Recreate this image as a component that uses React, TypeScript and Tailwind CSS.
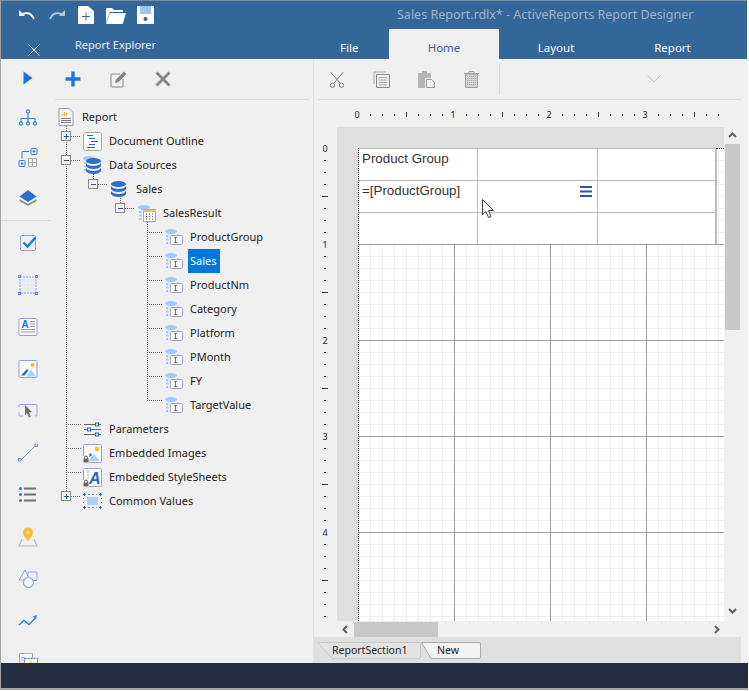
import type { ReactNode } from 'react';

const BLUE = '#2f7ad6';
const EDGE = '#8fa5d8';
const PALE = '#9fcbfa';
const GRAY = '#858585';

function Ico({ w, h, children }: { w: number; h: number; children: ReactNode }) {
  return (
    <svg width={w} height={h} viewBox={`0 0 ${w} ${h}`} fill="none" className="block shrink-0">
      {children}
    </svg>
  );
}

// rail icons
const railIcons: { id: string; icon: ReactNode }[] = [
  { id: 'play', icon: <Ico w={20} h={20}><path d="M5.500 3.500l9 6.500-9 6.500z" fill="#1a74d2" /></Ico> },
  {
    id: 'tree',
    icon: (
      <Ico w={20} h={20}>
        <g stroke="#3b84d6" strokeWidth="1.1" fill="#f0f0f0">
          <path d="M10 5v5M3 14v-3.500h14V14M10 10v4" />
          <circle cx="10" cy="3.500" r="1.600" />
          <circle cx="3" cy="15.500" r="1.600" />
          <circle cx="10" cy="15.500" r="1.600" />
          <circle cx="17" cy="15.500" r="1.600" />
        </g>
      </Ico>
    ),
  },
  {
    id: 'matrix',
    icon: (
      <Ico w={20} h={20}>
        <rect x="13" y="0.500" width="6" height="6" rx="1" stroke={BLUE} />
        <path d="M14.500 3.500h3M16 2v3" stroke={BLUE} />
        <rect x="1" y="12.500" width="6" height="6" rx="1" stroke={BLUE} />
        <path d="M2.500 15.500h3M4 14v3" stroke={BLUE} />
        <path d="M4 10.500V3.500h7" stroke={BLUE} />
        <path d="M10.500 10.500h8v8h-8zM14.500 10.500v8M10.500 14.500h8" stroke="#a8a8a8" />
      </Ico>
    ),
  },
  {
    id: 'layers',
    icon: (
      <Ico w={20} h={20}>
        <path d="M1.500 12l8.500 5 8.500-5" stroke="#8a8a8a" strokeWidth="1.600" />
        <path d="M10 2l8.500 6.500L10 14 1.500 8.500z" fill="#2a6fd0" />
      </Ico>
    ),
  },
];

const railIcons2: { id: string; icon: ReactNode }[] = [
  {
    id: 'check',
    icon: (
      <Ico w={20} h={20}>
        <rect x="2.500" y="2.500" width="15" height="15" rx="1.500" stroke={EDGE} />
        <path d="M5.500 9.500l4 4 8-9" stroke="#1f78d8" strokeWidth="2.400" />
      </Ico>
    ),
  },
  {
    id: 'container',
    icon: (
      <Ico w={20} h={20}>
        <path d="M2 2h16v16H2zM6 2v16M10 2v16M14 2v16M2 6h16M2 10h16M2 14h16" stroke="#dde3f0" strokeWidth="0.800" />
        <path d="M2 2h16v16H2z" stroke={EDGE} strokeDasharray="2 1" />
        <g fill="#f0f0f0" stroke="#4f86d8">
          <rect x="0.500" y="0.500" width="2" height="2" />
          <rect x="17.500" y="0.500" width="2" height="2" />
          <rect x="0.500" y="17.500" width="2" height="2" />
          <rect x="17.500" y="17.500" width="2" height="2" />
        </g>
      </Ico>
    ),
  },
  {
    id: 'textbox',
    icon: (
      <Ico w={20} h={20}>
        <rect x="1" y="1.500" width="18" height="17" rx="1" fill="#fafafa" stroke={EDGE} />
        <text x="3.500" y="10.500" fontSize="10" fontWeight="700" fill="#1f72d0" fontFamily="Liberation Sans, sans-serif">A</text>
        <path d="M12 4.500h5M12 7h5M12 9.500h5M3 12.500h14M3 15h14" stroke="#9a9a9a" />
      </Ico>
    ),
  },
  {
    id: 'image',
    icon: (
      <Ico w={20} h={20}>
        <rect x="1" y="1.500" width="18" height="17" rx="1" fill="#fafafa" stroke={EDGE} />
        <circle cx="14.500" cy="6" r="2" fill="#f4bc2c" />
        <path d="M8 17.500l5-7 5 7z" fill="#a8d3f7" />
        <path d="M3 16.500l6-6.500 1.500 1.500-4 5z" fill="#1f6fcf" />
      </Ico>
    ),
  },
  {
    id: 'select',
    icon: (
      <Ico w={20} h={20}>
        <path d="M1 6V4.500a1 1 0 011-1h16a1 1 0 011 1V14a1 1 0 01-1 1h-1M1 11v3a1 1 0 001 1h3" stroke={EDGE} />
        <path d="M7 4l7 7-3.200 .3 2 4.500-1.800 .8-2-4.500L7 14.500z" fill="#6f6f6f" />
      </Ico>
    ),
  },
  {
    id: 'line',
    icon: (
      <Ico w={20} h={20}>
        <path d="M2.500 17.500l15-15" stroke="#7f9fd8" />
        <rect x="0.500" y="15.500" width="2.500" height="2.500" fill="#f0f0f0" stroke="#6c8ccc" strokeWidth="0.800" />
        <rect x="17" y="1" width="2.500" height="2.500" fill="#f0f0f0" stroke="#6c8ccc" strokeWidth="0.800" />
      </Ico>
    ),
  },
  {
    id: 'list',
    icon: (
      <Ico w={20} h={20}>
        <circle cx="2.500" cy="3.500" r="1.500" fill="#2a78d6" />
        <circle cx="2.500" cy="9.500" r="1.500" fill="#2a78d6" />
        <circle cx="2.500" cy="15.500" r="1.500" fill="#2a78d6" />
        <path d="M6 3.500h12M6 9.500h12M6 15.500h12" stroke="#6f6f6f" strokeWidth="2" />
      </Ico>
    ),
  },
  {
    id: 'map',
    icon: (
      <Ico w={20} h={20}>
        <path d="M4 12l-3 7h18l-3-7" stroke="#b5b5b5" strokeWidth="1.200" />
        <path d="M10 14c-3-4-5-6-5-8.500a5 5 0 0110 0C15 8 13 10 10 14z" fill="#f5bd2f" />
        <circle cx="10" cy="5.500" r="1.500" fill="#fbeecb" />
      </Ico>
    ),
  },
  {
    id: 'shapes',
    icon: (
      <Ico w={20} h={20}>
        <path d="M10 3h9v8.500h-9z" stroke={EDGE} />
        <path d="M7 1L1 11h11z" fill="#f0f0f0" stroke={EDGE} />
        <circle cx="10.500" cy="13.500" r="5" fill="#f8f8f8" stroke={EDGE} strokeWidth="1.200" />
      </Ico>
    ),
  },
  {
    id: 'chart',
    icon: (
      <Ico w={20} h={20}>
        <path d="M1 14l5-4.500 5 4 7-7" stroke="#3b84d6" strokeWidth="1.500" />
        <path d="M14.500 5.500l4.500-1.500-1 4.500z" fill="#3b84d6" />
      </Ico>
    ),
  },
  {
    id: 'sub',
    icon: (
      <Ico w={20} h={20}>
        <path d="M1.500 .5h13v13h-13z" fill="#fafafa" stroke="#a9a9a9" />
        <path d="M3 4.500h4M3 7h4M3 10h4" stroke="#a9a9a9" />
        <path d="M6.500 5.500h13v13h-13z" fill="#fff" stroke="#1f78d8" strokeDasharray="2 1" />
        <path d="M10.500 14v-3M13 14v-6M15.500 14v-4" stroke="#f4bc2c" strokeWidth="1.200" />
      </Ico>
    ),
  },
];

// tree icons
function PaleDb() {
  return (
    <g fill={PALE}>
      <ellipse cx="6" cy="2.500" rx="6" ry="2.500" />
      <rect x="1" y="6" width="2.500" height="2" />
      <rect x="1" y="9.500" width="2.500" height="2" />
      <rect x="1" y="13" width="2.500" height="2" />
    </g>
  );
}

function Db({ x = 0, y = 0 }: { x?: number; y?: number }) {
  return (
    <g fill="#2e6dcc" transform={`translate(${x} ${y})`}>
      <ellipse cx="7.500" cy="3" rx="7.500" ry="3" />
      <path d="M0 5c1 2 4 3 7.500 3S14 7 15 5v3c-1 2-4 3-7.500 3S1 10 0 8z" />
      <path d="M0 10c1 2 4 3 7.500 3S14 12 15 10v3c-1 2-4 3-7.500 3S1 15 0 13z" />
    </g>
  );
}

const reportIcon = (
  <Ico w={16} h={18}>
    <path d="M1 .5h10l4 4v13H1z" fill="#fcfcfc" stroke="#9d94cc" />
    <path d="M4.500 5.500V8M6.500 4v4M8.500 5v3" stroke="#e9b130" />
    <path d="M3 10.500h10M3 12.500h10M3 14.500h10" stroke="#777" />
  </Ico>
);
const outlineIcon = (
  <Ico w={19} h={19}>
    <rect x="0.500" y="0.500" width="18" height="18" rx="2" fill="#fdfdfd" stroke="#a4a4ad" />
    <path d="M4 3.500h6M6 6.500h6M8 9.500h7M6 12.500h6M4 15.500h8" stroke="#2a69c7" strokeWidth="1.200" />
  </Ico>
);
const dataSourcesIcon = (
  <Ico w={18} h={18}>
    <PaleDb />
    <Db x={3} y={2} />
  </Ico>
);
const salesIcon = (
  <Ico w={16} h={17}>
    <Db />
  </Ico>
);
const resultIcon = (
  <Ico w={18} h={17}>
    <PaleDb />
    <rect x="5.500" y="4.500" width="12" height="12" fill="#fbfbfb" stroke="#a5a0cf" />
    <path d="M5.500 5h12v2h-12z" fill="#eabd6e" />
    <path d="M8 9h1M11 9h1M14 9h1M8 11.500h1M11 11.500h1M14 11.500h1M8 14h1M11 14h1M14 14h1" stroke="#555" />
  </Ico>
);
const fieldIcon = (
  <Ico w={18} h={16}>
    <PaleDb />
    <rect x="5.500" y="6.500" width="12" height="9" rx="1" fill="#fbfbfb" stroke="#a5a0cf" />
    <path d="M9 8.500h3M9 13.500h3M10.500 8.500V13.500" stroke="#777" />
  </Ico>
);
const paramsIcon = (
  <Ico w={19} h={15}>
    <path d="M1 2.500h11M16 2.500h2M1 7.500h3M8 7.500h10M1 12.500h11M16 12.500h2" stroke="#666" />
    <rect x="12.500" y="1" width="3" height="3" stroke="#2a69c7" />
    <rect x="4.500" y="6" width="3" height="3" stroke="#2a69c7" />
    <rect x="12.500" y="11" width="3" height="3" stroke="#2a69c7" />
  </Ico>
);
const imagesIcon = (
  <Ico w={19} h={19}>
    <rect x="0.500" y="0.500" width="18" height="18" rx="1" fill="#fcfcfc" stroke={EDGE} />
    <circle cx="14" cy="5" r="2.200" fill="#f4bc2c" />
    <path d="M5 17l6-7 6 7z" fill="#a8d3f7" />
    <path d="M6 13l1-4 2.500 2z" fill="#2a69c7" />
    <rect x="0" y="12" width="6" height="7" fill="#f0f0f0" />
    <path d="M1.500 14.500v-1a1.500 1.500 0 013 0v1" stroke="#666" />
    <rect x="0.500" y="14.500" width="5" height="4" fill="#666" />
  </Ico>
);
const sheetsIcon = (
  <Ico w={19} h={19}>
    <rect x="0.500" y="0.500" width="18" height="18" rx="1" fill="#fcfcfc" stroke={EDGE} />
    <text x="6" y="16" fontSize="16" fontWeight="700" fontStyle="italic" fill="#2a62c0" fontFamily="Liberation Sans, sans-serif">A</text>
    <path d="M4 4h2M4 7h2M4 10h2" stroke={PALE} strokeWidth="1.500" />
    <rect x="0" y="12" width="6" height="7" fill="#f0f0f0" />
    <path d="M1.500 14.500v-1a1.500 1.500 0 013 0v1" stroke="#666" />
    <rect x="0.500" y="14.500" width="5" height="4" fill="#666" />
  </Ico>
);
const commonIcon = (
  <Ico w={19} h={16}>
    <rect x="4" y="4" width="11" height="8" fill="#a8d3f7" />
    <path d="M5 1.500h2M9 1.500h2M13 1.500h1M5 14.500h2M9 14.500h2M13 14.500h1M.5 5v1M.5 9v1M18.500 5v1M18.500 9v1" stroke="#8a8a8a" />
    <path d="M0 1.500h3M1.500 0v3M16 1.500h3M17.500 0v3M0 14.500h3M1.500 13v3M16 14.500h3M17.500 13v3" stroke="#2a69c7" />
  </Ico>
);

const indent = ['pl-[4px]', 'pl-[29px]', 'pl-[57px]', 'pl-[84px]', 'pl-[111px]'];

const treeRows: { label: string; depth: number; icon: ReactNode; selected?: boolean }[] = [
  { label: 'Report', depth: 0, icon: reportIcon },
  { label: 'Document Outline', depth: 1, icon: outlineIcon },
  { label: 'Data Sources', depth: 1, icon: dataSourcesIcon },
  { label: 'Sales', depth: 2, icon: salesIcon },
  { label: 'SalesResult', depth: 3, icon: resultIcon },
  { label: 'ProductGroup', depth: 4, icon: fieldIcon },
  { label: 'Sales', depth: 4, icon: fieldIcon, selected: true },
  { label: 'ProductNm', depth: 4, icon: fieldIcon },
  { label: 'Category', depth: 4, icon: fieldIcon },
  { label: 'Platform', depth: 4, icon: fieldIcon },
  { label: 'PMonth', depth: 4, icon: fieldIcon },
  { label: 'FY', depth: 4, icon: fieldIcon },
  { label: 'TargetValue', depth: 4, icon: fieldIcon },
  { label: 'Parameters', depth: 1, icon: paramsIcon },
  { label: 'Embedded Images', depth: 1, icon: imagesIcon },
  { label: 'Embedded StyleSheets', depth: 1, icon: sheetsIcon },
  { label: 'Common Values', depth: 1, icon: commonIcon },
];

function Toggle({ x, y, open }: { x: number; y: number; open?: boolean }) {
  return (
    <g shapeRendering="crispEdges">
      <rect x={x - 4.5} y={y - 4.5} width="9" height="9" fill="#f4f4f4" stroke="#8b8b8b" />
      <path d={`M${x - 2} ${y + 0.5}h5`} stroke="#2b4f8f" />
      {!open && <path d={`M${x + 0.5} ${y - 2}v5`} stroke="#2b4f8f" />}
    </g>
  );
}

// dotted connectors, in page coordinates
function TreeLines() {
  const fieldYs = [237, 261, 285, 309, 333, 357, 381, 405];
  const d = [
    'M66.500 127V496',
    'M71 141.500H81M71 165.500H81M66 429.500H81M66 453.500H81M66 477.500H81M71 501.500H81',
    'M93.500 177V184M98 189.500H108',
    'M120.500 201V208M125 213.500H135',
    'M147.500 225V405',
    ...fieldYs.map((y) => `M147 ${y + 0.5}H163`),
  ].join('');
  return (
    <svg width="259" height="420" viewBox="54 105 259 420" fill="none" className="absolute left-0 top-0">
      <path d={d} stroke="#666" strokeDasharray="1 1" shapeRendering="crispEdges" />
      <Toggle x={66} y={141} />
      <Toggle x={66} y={165} open />
      <Toggle x={93} y={189} open />
      <Toggle x={120} y={213} open />
      <Toggle x={66} y={501} />
    </svg>
  );
}

function TreeRow({ label, depth, icon, selected }: (typeof treeRows)[number]) {
  return (
    <div className={`flex h-6 items-center ${indent[depth]}`}>
      <div className={depth === 0 ? 'w-[24px]' : depth === 1 ? 'w-[26px]' : 'w-[25px]'}>{icon}</div>
      <span className={selected ? '-ml-[2px] flex h-6 w-[32px] items-center bg-[#0078d7] px-[2px] text-white' : ''}>{label}</span>
    </div>
  );
}

function HorizontalRuler() {
  const ticks = Array.from({ length: 31 }, (_, i) => 358 + i * 12);
  return (
    <svg width="374" height="27" viewBox="354 100 374 27" className="block">
      {ticks.map((x, i) =>
        i % 8 === 0 ? null : (
          <path key={x} d={i % 4 === 0 ? `M${x + 0.5} 112v5` : `M${x + 0.5} 114v2`} stroke="#333" shapeRendering="crispEdges" />
        ),
      )}
      {[0, 1, 2, 3].map((n) => (
        <text key={n} x={357 + n * 96} y="118" textAnchor="middle" fontSize="9" fill="#222" fontFamily="Noto Sans, sans-serif">
          {n}
        </text>
      ))}
    </svg>
  );
}

function VerticalRuler() {
  const ticks = Array.from({ length: 40 }, (_, i) => 148 + i * 12);
  return (
    <svg width="23" height="494" viewBox="314 127 23 494" className="block">
      {ticks.map((y, i) =>
        i % 8 === 0 ? (
          <text key={y} x="325" y={y + 4} textAnchor="middle" fontSize="9" fill="#222" fontFamily="Noto Sans, sans-serif">
            {i / 8}
          </text>
        ) : (
          <path key={y} d={i % 4 === 0 ? `M322 ${y + 0.5}h6` : `M324 ${y + 0.5}h2`} stroke="#333" shapeRendering="crispEdges" />
        ),
      )}
    </svg>
  );
}

function Chevron({ d }: { d: string }) {
  return (
    <svg width="9" height="9" viewBox="0 0 9 9" fill="none" className="block">
      <path d={d} stroke="#5f5f5f" strokeWidth="2" />
    </svg>
  );
}

function TableCanvas() {
  return (
    <div className="relative flex-1 overflow-hidden bg-white bg-[linear-gradient(to_right,#9c9c9c_1px,transparent_1px),linear-gradient(to_bottom,#9c9c9c_1px,transparent_1px),linear-gradient(to_right,#eeeeee_1px,transparent_1px),linear-gradient(to_bottom,#eeeeee_1px,transparent_1px)] bg-[size:96px_96px,96px_96px,12px_12px,12px_12px]">
      <div className="absolute bottom-0 left-0 top-0 w-px border-l border-dotted border-black bg-white" />
      <div className="absolute left-[358px] right-0 top-0 h-px border-t border-dotted border-black bg-white" />
      <div className="w-[359px] font-['Liberation_Sans',sans-serif] text-[13.33px] leading-[16px] text-[#333]">
        {[0, 1, 2].map((row) => (
          <div key={row} className="flex h-8 border-t border-[#bcbcbc] bg-white">
            <div className="w-[120px] border-r border-[#bcbcbc] pl-1 pt-[2px]">
              {row === 0 ? 'Product Group' : row === 1 ? '=[ProductGroup]' : ''}
            </div>
            <div className="flex w-[120px] justify-end border-r border-[#bcbcbc] pr-[5px] pt-[5px]">
              {row === 1 && (
                <svg width="12" height="11" viewBox="0 0 12 11" className="block">
                  <path d="M0 1h12M0 5.500h12M0 10h12" stroke="#2a57a5" strokeWidth="2" />
                </svg>
              )}
            </div>
            <div className="w-[119px] border-r-2 border-[#bcbcbc]" />
          </div>
        ))}
      </div>
      {/* mouse pointer over the cell */}
      <svg width="14" height="20" viewBox="0 0 14 20" className="absolute left-[124px] top-[51px]">
        <path d="M.5.5v15l3.500-3 2.500 6 2.500-1-2.500-6h5z" fill="#fff" stroke="#222" strokeWidth="0.900" />
      </svg>
    </div>
  );
}

function Tab({ label, active }: { label: string; active?: boolean }) {
  return (
    <div className={`relative flex h-[17px] items-center text-[10.5px] ${active ? 'w-[60px] justify-center pr-[6px]' : 'w-[104px] pl-[15px]'}`}>
      {active ? (
        <svg width="60" height="17" viewBox="0 0 60 17" className="absolute left-0 top-0">
          <path d="M.5.5H58a1.500 1.500 0 011.500 1.500v13a1.500 1.500 0 01-1.500 1.500H10z" fill="#f3f3f3" stroke="#ababab" />
        </svg>
      ) : (
        <svg width="104" height="17" viewBox="0 0 104 17" className="absolute left-0 top-0">
          <path d="M.5.5H102a1.500 1.500 0 011.500 1.500v13a1.500 1.500 0 01-1.500 1.500H15z" fill="#e3e3e3" stroke="#c6c6c6" />
        </svg>
      )}
      <span className="relative">{label}</span>
    </div>
  );
}

export default function App() {
  return (
    <div className="h-[691px] w-[749px] overflow-hidden bg-white font-['Noto_Sans',sans-serif] text-[11px] text-[#222]">
      <div className="flex h-[690px] w-[748px] flex-col border-b-2 border-l border-b-[#a3a3a3] border-l-[#a3a3a3] bg-[#f0f0f0]">
        {/* title bar */}
        <header className="mr-px h-[59px] shrink-0 bg-[#336699]">
          <div className="flex h-[29px] items-center border-t border-[#7d8b9b]">
            <div className="ml-[17px] flex items-center">
              <svg width="18" height="12" viewBox="0 0 18 12" className="block">
                <path d="M1 1v6h6z" fill="#fff" />
                <path d="M3 6c4-3 10-3 13 4" stroke="#fff" strokeWidth="1.800" fill="none" />
              </svg>
              <svg width="18" height="12" viewBox="0 0 18 12" className="ml-[12px] block">
                <path d="M17 1v6h-6z" fill="#b9c8da" />
                <path d="M15 6c-4-3-10-3-13 4" stroke="#b9c8da" strokeWidth="1.800" fill="none" />
              </svg>
              <svg width="16" height="18" viewBox="0 0 16 18" className="ml-[12px] block">
                <path d="M0 1a1 1 0 011-1h9l6 5v12a1 1 0 01-1 1H1a1 1 0 01-1-1z" fill="#fff" />
                <path d="M4 10.500h8M8 6.500v8" stroke="#336699" />
              </svg>
              <svg width="20" height="17" viewBox="0 0 20 17" className="ml-[12px] block">
                <path d="M0 15V2a1 1 0 011-1h5l2 2h8a1 1 0 011 1v1H4z" fill="#fff" />
                <path d="M4 6h16l-3 10a1 1 0 01-1 1H1a1 1 0 01-1-1z" fill="#fff" />
              </svg>
              <svg width="17" height="18" viewBox="0 0 17 18" className="ml-[11px] block">
                <path d="M0 1a1 1 0 011-1h15a1 1 0 011 1v16a1 1 0 01-1 1H1a1 1 0 01-1-1z" fill="#fff" />
                <rect x="3" y="0" width="11" height="8" fill="#9dc6f4" />
                <circle cx="8.500" cy="13" r="2" fill="#336699" />
              </svg>
            </div>
            <div className="ml-[243px] text-[12.5px] text-[#a7b2c0]">Sales Report.rdlx* - ActiveReports Report Designer</div>
          </div>
          <div className="flex h-[30px] text-[11.5px] text-white">
            <div className="flex w-[313px]">
              <svg width="12" height="12" viewBox="0 0 12 12" className="ml-[27px] mt-[15px] block">
                <path d="M.5.5l11 11M11.500.5l-11 11" stroke="#fff" />
              </svg>
              <div className="ml-[35px] mt-[8px] text-[11px] text-[#e6edf5]">Report Explorer</div>
            </div>
            <div className="w-[75px] pl-[26px] pt-[10px]">File</div>
            <div className="w-[110px] bg-[#f0f0f0] pt-[10px] text-center text-[#3d5a9a]">Home</div>
            <div className="w-[114px] pt-[10px] text-center">Layout</div>
            <div className="w-[119px] pt-[10px] text-center">Report</div>
          </div>
        </header>

        <div className="flex min-h-0 flex-1">
          {/* toolbox rail */}
          <aside className="w-[53px] shrink-0 overflow-hidden">
            {railIcons.map((r) => (
              <div key={r.id} className="flex h-10 items-center justify-center first:mt-[-1px]">
                {r.icon}
              </div>
            ))}
            <div className="mb-[1px] mt-[2px] h-px w-[50px] bg-[#dcdcdc]" />
            {railIcons2.map((r) => (
              <div key={r.id} className="flex h-[42px] items-center justify-center">
                {r.icon}
              </div>
            ))}
          </aside>

          {/* report explorer */}
          <section className="w-[260px] shrink-0 border-r border-[#e2e2e2]">
            <div className="mx-px flex h-[41px] w-[254px] items-center border-b border-[#dcdcdc] pl-[9px]">
              <svg width="18" height="18" viewBox="0 0 18 18" className="block">
                <path d="M9 1.500v15M1.500 9h15" stroke="#1a78d6" strokeWidth="3.400" />
              </svg>
              <svg width="18" height="18" viewBox="0 0 18 18" fill="none" className="ml-[28px] block">
                <path d="M13 8.500V16a1 1 0 01-1 1H2a1 1 0 01-1-1V5a1 1 0 011-1h8" stroke="#a8a8a8" strokeWidth="1.500" />
                <path d="M5 13l1-3.500L14 1.500l2.500 2.500L8.500 12z" fill={GRAY} />
              </svg>
              <svg width="16" height="16" viewBox="0 0 16 16" className="ml-[27px] block">
                <path d="M1.500 1.500l13 13M14.500 1.500l-13 13" stroke={GRAY} strokeWidth="2.800" />
              </svg>
            </div>
            <div className="relative pt-[5px]">
              <TreeLines />
              <div className="relative">
                {treeRows.map((row) => (
                  <TreeRow key={`${row.depth}-${row.label}`} {...row} />
                ))}
              </div>
            </div>
          </section>

          {/* design surface */}
          <section className="flex w-[427px] shrink-0 flex-col">
            <div className="ml-[4px] flex h-[41px] items-center border-b border-[#dcdcdc]">
              <div className="-ml-[4px] flex w-[45px] justify-center">
                <svg width="16" height="17" viewBox="0 0 16 17" fill="none" className="block">
                  <path d="M1.500 1l10 11.500M14.500 1l-10 11.500" stroke="#7d7d7d" />
                  <circle cx="3.500" cy="14.200" r="2.200" stroke="#7d7d7d" />
                  <circle cx="12.500" cy="14.200" r="2.200" stroke="#7d7d7d" />
                </svg>
              </div>
              <div className="flex w-[45px] justify-center">
                <svg width="17" height="17" viewBox="0 0 17 17" fill="none" className="block">
                  <path d="M1 13V1h12" stroke="#a5a5a5" />
                  <path d="M3.500 3.500h13v13h-13z" stroke="#8a8a8a" />
                  <path d="M6 6.500h8M6 9h8M6 11.500h8M6 14h8" stroke="#a5a5a5" />
                </svg>
              </div>
              <div className="flex w-[45px] justify-center">
                <svg width="17" height="18" viewBox="0 0 17 18" fill="none" className="block">
                  <path d="M0 3h4V1h5v2h4v5H7v10H0z" fill="#b4b4b4" />
                  <path d="M8.500 9.500h5l3 3v5h-8z" fill="#f3f3f3" stroke="#9a9a9a" />
                </svg>
              </div>
              <div className="flex w-[45px] justify-center">
                <svg width="16" height="17" viewBox="0 0 16 17" fill="none" className="block">
                  <path d="M0 2.500h15M5 2.500V.5h5v2" stroke="#a0a0a0" />
                  <path d="M1.500 3h12v13.500h-12z" fill="#d2d2d2" stroke="#a0a0a0" />
                  <path d="M3.500 5v10M5.500 5v10M7.500 5v10M9.500 5v10M11.500 5v10" stroke="#a8a8a8" strokeDasharray="1 1" />
                </svg>
              </div>
              <div className="ml-[5px] h-8 w-px bg-[#d8d8d8]" />
              <svg width="14" height="8" viewBox="0 0 14 8" fill="none" className="ml-[147px] block">
                <path d="M.5.5L7 7l6.500-6.500" stroke="#c4c4c4" />
              </svg>
            </div>

            <div className="h-[27px] pl-[40px]">
              <HorizontalRuler />
            </div>

            <div className="flex h-[510px]">
              <div className="w-[23px] shrink-0">
                <VerticalRuler />
              </div>
              <div className="flex w-[387px] shrink-0 flex-col">
                <div className="flex h-[494px] flex-col bg-[#dfdfdf] pl-[21px] pt-[21px]">
                  <TableCanvas />
                </div>
                <div className="flex h-4 items-center">
                  <div className="flex w-[17px] justify-center">
                    <Chevron d="M6 1L2.500 4.500 6 8" />
                  </div>
                  <div className="h-[15px] w-[84px] bg-[#c8c8c8]" />
                  <div className="ml-[274px]">
                    <Chevron d="M3 1l3.500 3.500L3 8" />
                  </div>
                </div>
              </div>
              <div className="flex h-[494px] w-4 shrink-0 flex-col items-center">
                <div className="flex h-[17px] items-center">
                  <Chevron d="M1 6l3.500-3.500L8 6" />
                </div>
                <div className="h-[186px] w-[15px] bg-[#c8c8c8]" />
                <div className="mt-[276px]">
                  <Chevron d="M1 3l3.500 3.500L8 3" />
                </div>
              </div>
            </div>

            <div className="flex h-[26px] bg-[#dfdfdf] pl-[3px] pt-[5px]">
              <Tab label="ReportSection1" />
              <Tab label="New" active />
            </div>
          </section>
        </div>

        <footer className="h-[25px] shrink-0 bg-[#252d40]" />
      </div>
    </div>
  );
}
